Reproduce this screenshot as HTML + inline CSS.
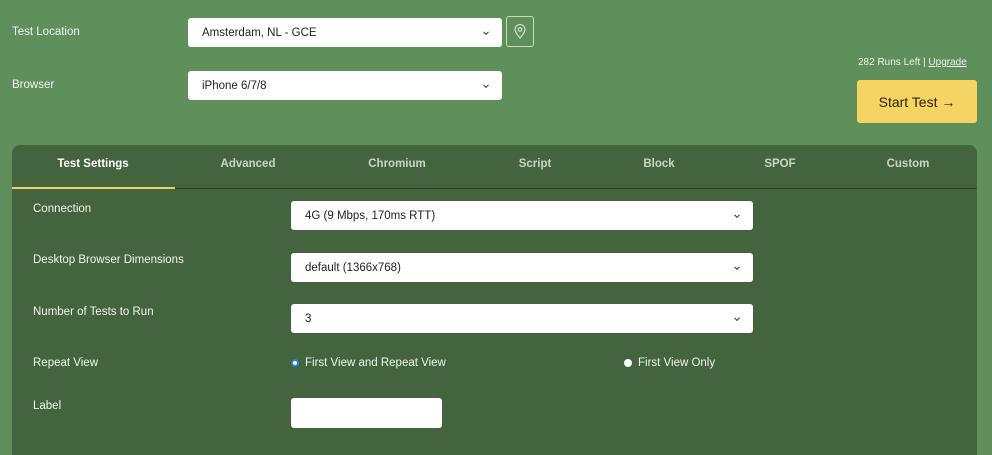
<!DOCTYPE html>
<html><head><style>
body{margin:0;width:992px;height:447px;background:#5f8f5a;font-family:"Liberation Sans",sans-serif;position:relative;overflow:hidden;color:#fff}
.a{position:absolute}
.lbl{font-size:11.5px;color:#f2f6ee}
.sel{position:absolute;background:#fff;border-radius:3px;color:#222;font-size:11.5px;box-sizing:border-box;padding-left:14px;display:flex;align-items:center}
.sel:after{content:"";position:absolute;right:14px;top:50%;width:3px;height:3px;border-right:1.3px solid #333;border-bottom:1.3px solid #333;transform:translateY(-70%) rotate(45deg)}
.tab{position:absolute;top:158px;font-size:11.5px;font-weight:bold;color:#c9d6c4;transform:translateX(-50%)}
</style></head><body>
<div class="a lbl" style="left:12px;top:26px">Test Location</div>
<div class="sel" style="left:188px;top:18px;width:314px;height:29px">Amsterdam, NL - GCE</div>
<div class="a" style="left:506px;top:16px;width:28px;height:31px;border:1px solid #c8dcc2;border-radius:3px;box-sizing:border-box">
<svg width="26" height="29" viewBox="0 0 26 29"><path d="M13 21c-3-3.5-5-6-5-8.5a5 5 0 0 1 10 0c0 2.5-2 5-5 8.5z" fill="none" stroke="#d8e6d3" stroke-width="1.1"/><circle cx="13" cy="12.5" r="1.8" fill="none" stroke="#d8e6d3" stroke-width="1.1"/></svg></div>
<div class="a lbl" style="left:12px;top:79px">Browser</div>
<div class="sel" style="left:188px;top:71px;width:314px;height:29px">iPhone 6/7/8</div>
<div class="a" style="left:858px;top:57px;font-size:10px;color:#f0f4ec">282 Runs Left | <u>Upgrade</u></div>
<div class="a" style="left:857px;top:80px;width:120px;height:43px;background:#f5d463;border-radius:3px;color:#2b2410;font-size:14px;display:flex;align-items:center;justify-content:center">Start Test →</div>
<div class="a" style="left:12px;top:145px;width:965px;height:310px;background:#44643e;border-radius:8px 8px 0 0"></div>
<div class="a" style="left:12px;top:188px;width:965px;height:1px;background:#2c4428"></div>
<div class="a" style="left:12px;top:187px;width:163px;height:2px;background:#e4d46a"></div>
<div class="tab" style="left:93px;color:#fff">Test Settings</div>
<div class="tab" style="left:248px">Advanced</div>
<div class="tab" style="left:397px">Chromium</div>
<div class="tab" style="left:535px">Script</div>
<div class="tab" style="left:659px">Block</div>
<div class="tab" style="left:780px">SPOF</div>
<div class="tab" style="left:908px">Custom</div>
<div class="a lbl" style="left:33px;top:203px">Connection</div>
<div class="sel" style="left:291px;top:201px;width:462px;height:29px">4G (9 Mbps, 170ms RTT)</div>
<div class="a lbl" style="left:33px;top:254px">Desktop Browser Dimensions</div>
<div class="sel" style="left:291px;top:253px;width:462px;height:29px">default (1366x768)</div>
<div class="a lbl" style="left:33px;top:306px">Number of Tests to Run</div>
<div class="sel" style="left:291px;top:304px;width:462px;height:29px">3</div>
<div class="a lbl" style="left:33px;top:357px">Repeat View</div>
<div class="a" style="left:291px;top:359px;width:8px;height:8px;border-radius:50%;background:#fff;border:2px solid #2d7be5;box-sizing:border-box"></div>
<div class="a lbl" style="left:305px;top:357px">First View and Repeat View</div>
<div class="a" style="left:624px;top:359px;width:8px;height:8px;border-radius:50%;background:#fff"></div>
<div class="a lbl" style="left:638px;top:357px">First View Only</div>
<div class="a lbl" style="left:33px;top:400px">Label</div>
<div class="a" style="left:291px;top:398px;width:151px;height:30px;background:#fff;border-radius:3px"></div>
</body></html>
